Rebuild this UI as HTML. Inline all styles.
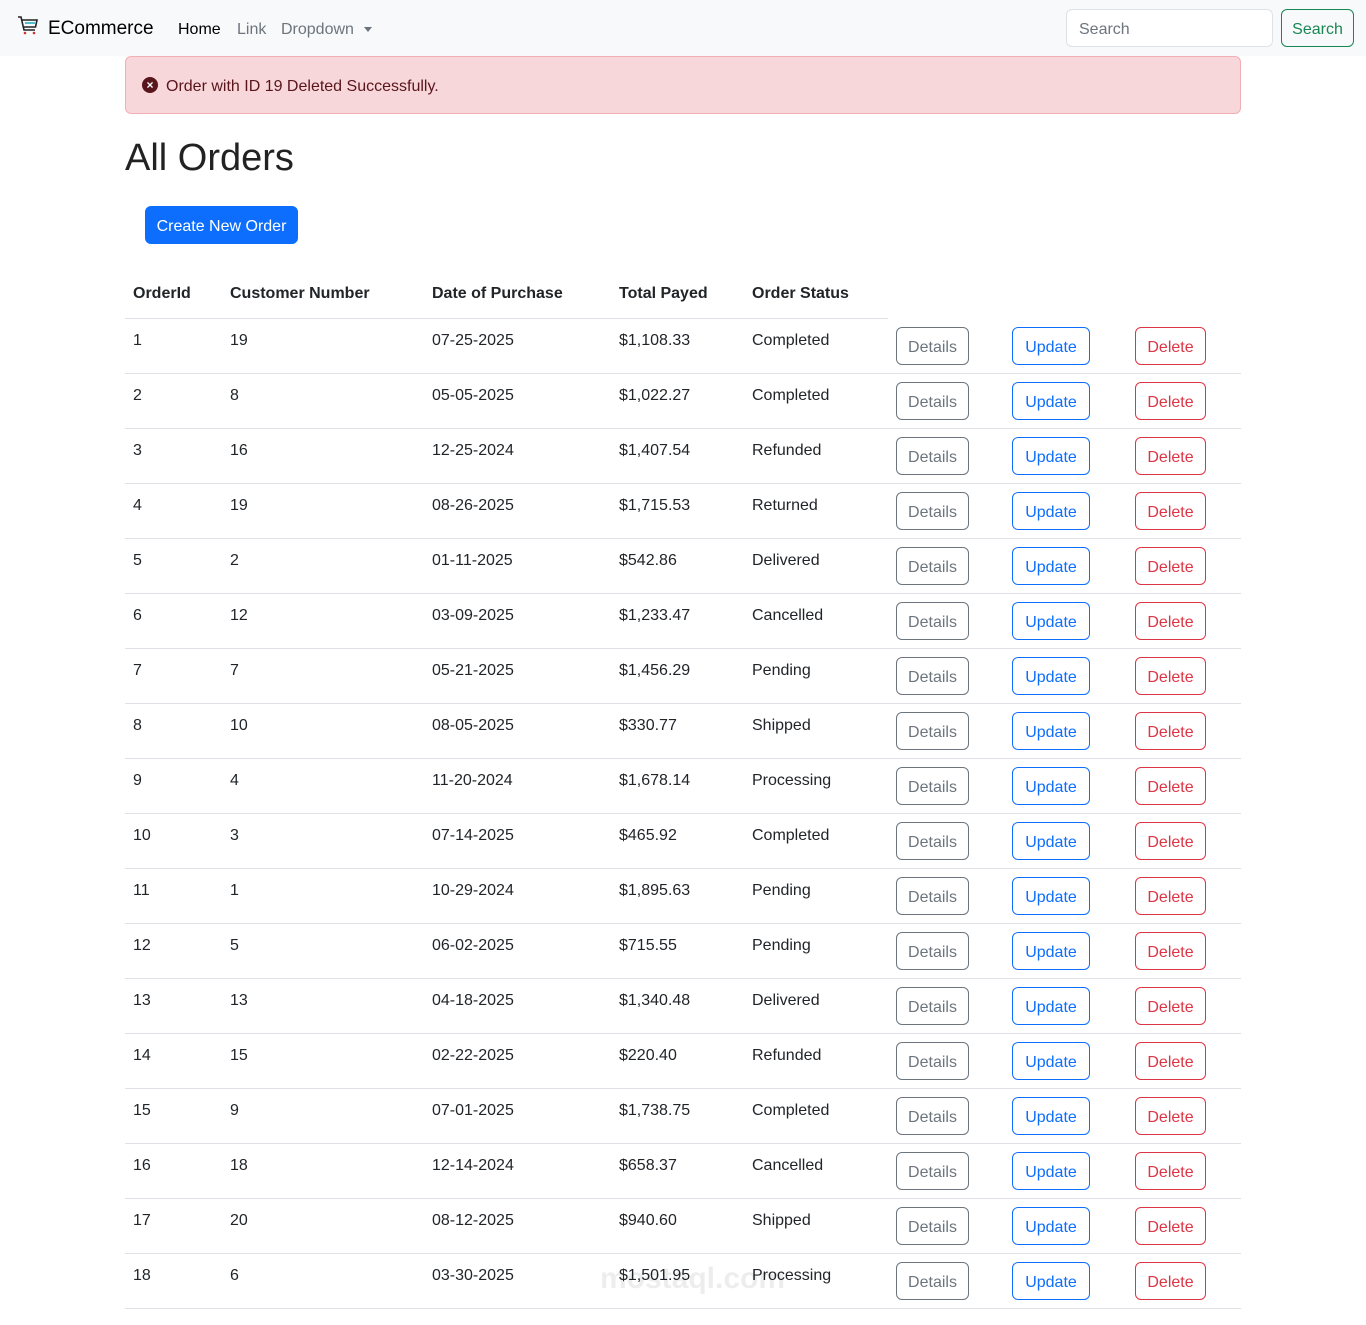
<!DOCTYPE html>
<html><head><meta charset="utf-8"><style>
*{box-sizing:border-box;margin:0;padding:0}
body{width:1366px;height:1325px;background:#fff;font-family:"Liberation Sans",sans-serif;color:#212529;font-size:16px;position:relative;overflow:hidden}
.nav{position:absolute;left:0;top:0;width:1366px;height:56px;background:#f8f9fa}
.a{position:absolute;white-space:nowrap}
.btn{position:absolute;height:38px;border:1px solid;border-radius:6px;font-size:16px;display:flex;align-items:center;justify-content:center;padding-top:3px}
.line{position:absolute;height:1px;background:#dee2e6}
</style></head><body>
<div class="nav">
<svg class="a" style="left:17px;top:15px" width="22" height="22" viewBox="0 0 22 22" fill="none" stroke="#222" stroke-width="1.6"><path d="M1 2h3l3 13h11"/><path d="M5 5h15l-1.5 7H6.5" /><path d="M8 8h10" stroke="#2bb0c0"/><circle cx="8" cy="18" r="1.3" fill="#c33" stroke="none"/><circle cx="17" cy="18" r="1.3" fill="#c33" stroke="none"/></svg>
<div class="a" style="left:48px;top:18px;font-size:19px;color:#000">ECommerce</div>
<div class="a" style="left:178px;top:21px;color:#000">Home</div>
<div class="a" style="left:237px;top:21px;color:#6c757d">Link</div>
<div class="a" style="left:281px;top:21px;color:#6c757d">Dropdown</div>
<div class="a" style="left:364px;top:27px;width:0;height:0;border-left:4px solid transparent;border-right:4px solid transparent;border-top:5px solid #6c757d"></div>
<div class="a" style="left:1066px;top:9px;width:207px;height:38px;background:#fff;border:1px solid #dee2e6;border-radius:6px;padding:11px 12px;color:#6c757d">Search</div>
<div class="btn" style="left:1281px;top:9px;width:73px;border-color:#198754;color:#198754">Search</div>
</div>
<div class="a" style="left:125px;top:56px;width:1116px;height:58px;background:#f8d7da;border:1px solid #f1aeb5;border-radius:6px"></div>
<div class="a" style="left:142px;top:77px;width:16px;height:16px;border-radius:50%;background:#58151c;color:#fff;font-size:12px;line-height:16px;text-align:center;font-weight:bold">×</div>
<div class="a" style="left:166px;top:78px;color:#58151c">Order with ID 19 Deleted Successfully.</div>
<div class="a" style="left:125px;top:137px;font-size:38px;color:#222">All Orders</div>
<div class="btn" style="left:145px;top:206px;width:153px;background:#0d6efd;border-color:#0d6efd;color:#fff">Create New Order</div>
<div class="a" style="top:285px;left:133px;font-weight:bold">OrderId</div>
<div class="a" style="top:285px;left:230px;font-weight:bold">Customer Number</div>
<div class="a" style="top:285px;left:432px;font-weight:bold">Date of Purchase</div>
<div class="a" style="top:285px;left:619px;font-weight:bold">Total Payed</div>
<div class="a" style="top:285px;left:752px;font-weight:bold">Order Status</div>
<div class="line" style="left:125px;top:318px;width:763px"></div>
<div id="rows"></div>
<div class="a" style="left:600px;top:1262px;font-size:30px;font-weight:bold;color:rgba(0,0,0,0.07)">mostaql.com</div>
<script>
var d=[[1,19,"07-25-2025","$1,108.33","Completed"],[2,8,"05-05-2025","$1,022.27","Completed"],[3,16,"12-25-2024","$1,407.54","Refunded"],[4,19,"08-26-2025","$1,715.53","Returned"],[5,2,"01-11-2025","$542.86","Delivered"],[6,12,"03-09-2025","$1,233.47","Cancelled"],[7,7,"05-21-2025","$1,456.29","Pending"],[8,10,"08-05-2025","$330.77","Shipped"],[9,4,"11-20-2024","$1,678.14","Processing"],[10,3,"07-14-2025","$465.92","Completed"],[11,1,"10-29-2024","$1,895.63","Pending"],[12,5,"06-02-2025","$715.55","Pending"],[13,13,"04-18-2025","$1,340.48","Delivered"],[14,15,"02-22-2025","$220.40","Refunded"],[15,9,"07-01-2025","$1,738.75","Completed"],[16,18,"12-14-2024","$658.37","Cancelled"],[17,20,"08-12-2025","$940.60","Shipped"],[18,6,"03-30-2025","$1,501.95","Processing"]];
var h="",xs=[133,230,432,619,752];
d.forEach(function(r,i){var y=318+i*55;
for(var j=0;j<5;j++)h+='<div class="a" style="left:'+xs[j]+'px;top:'+(y+14)+'px">'+r[j]+'</div>';
h+='<div class="btn" style="left:896px;top:'+(y+9)+'px;width:73px;border-color:#6c757d;color:#6c757d">Details</div>';
h+='<div class="btn" style="left:1012px;top:'+(y+9)+'px;width:78px;border-color:#0d6efd;color:#0d6efd">Update</div>';
h+='<div class="btn" style="left:1135px;top:'+(y+9)+'px;width:71px;border-color:#dc3545;color:#dc3545">Delete</div>';
h+='<div class="line" style="left:125px;top:'+(y+55)+'px;width:1116px"></div>';});
document.getElementById("rows").innerHTML=h;
</script>
</body></html>
